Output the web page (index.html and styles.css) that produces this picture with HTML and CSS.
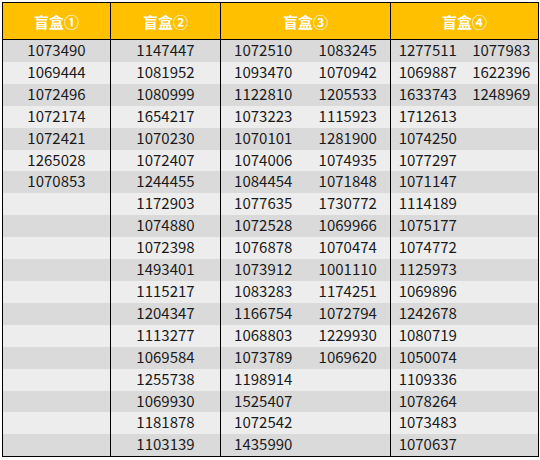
FILE: index.html
```html
<!DOCTYPE html>
<html>
<head>
<meta charset="utf-8">
<link rel="stylesheet" href="styles.css">
</head>
<body>
<table class="grid">
<colgroup>
<col class="c1"><col class="c2"><col class="c3a"><col class="c3b"><col class="c4a"><col class="c4b">
</colgroup>
<thead>
<tr><th>盲盒①</th><th>盲盒②</th><th colspan="2">盲盒③</th><th colspan="2">盲盒④</th></tr>
</thead>
<tbody id="body"></tbody>
</table>
<script src="app.js"></script>
</body>
</html>
```
FILE: app.js
```js
const cols = [
  ["1073490","1069444","1072496","1072174","1072421","1265028","1070853"],
  ["1147447","1081952","1080999","1654217","1070230","1072407","1244455","1172903","1074880","1072398","1493401","1115217","1204347","1113277","1069584","1255738","1069930","1181878","1103139"],
  ["1072510","1093470","1122810","1073223","1070101","1074006","1084454","1077635","1072528","1076878","1073912","1083283","1166754","1068803","1073789","1198914","1525407","1072542","1435990"],
  ["1083245","1070942","1205533","1115923","1281900","1074935","1071848","1730772","1069966","1070474","1001110","1174251","1072794","1229930","1069620"],
  ["1277511","1069887","1633743","1712613","1074250","1077297","1071147","1114189","1075177","1074772","1125973","1069896","1242678","1080719","1050074","1109336","1078264","1073483","1070637"],
  ["1077983","1622396","1248969"]
];
const classes = ["g1","g2","g3a","g3b","g4a","g4b"];
const body = document.getElementById("body");
for (let r = 0; r < 19; r++) {
  const tr = document.createElement("tr");
  tr.className = r % 2 === 0 ? "dark" : "light";
  cols.forEach((c, i) => {
    const td = document.createElement("td");
    td.className = classes[i];
    td.textContent = c[r] || "";
    tr.appendChild(td);
  });
  body.appendChild(tr);
}
```
FILE: styles.css
```css
html, body { margin: 0; padding: 0; background: #fff; }
body { padding: 2px; }
.grid {
  border-collapse: collapse;
  table-layout: fixed;
  width: 537px;
  font-family: "Noto Sans CJK SC", "Noto Sans", sans-serif;
  font-size: 15px;
  color: #1a1a1a;
  border: 1px solid #000;
}
.c1 { width: 108px; }
.c2 { width: 110px; }
.c3a { width: 85px; }
.c3b { width: 85px; }
.c4a { width: 74px; }
.c4b { width: 74px; }
th {
  background: #ffc000;
  color: #fff;
  font-weight: bold;
  height: 36px;
  padding: 0;
  border: 1px solid #000;
  font-size: 15px;
}
td {
  box-sizing: border-box;
  height: 21.9px;
  padding: 0 0 2px;
  text-align: center;
  line-height: 19.9px;
  white-space: nowrap;
}
.g1, .g2, .g3a, .g4a { border-left: 1px solid #000; }
.g4b { border-right: 1px solid #000; }
tr.dark td { background: #dadada; }
tr.light td { background: #ededed; }
```
